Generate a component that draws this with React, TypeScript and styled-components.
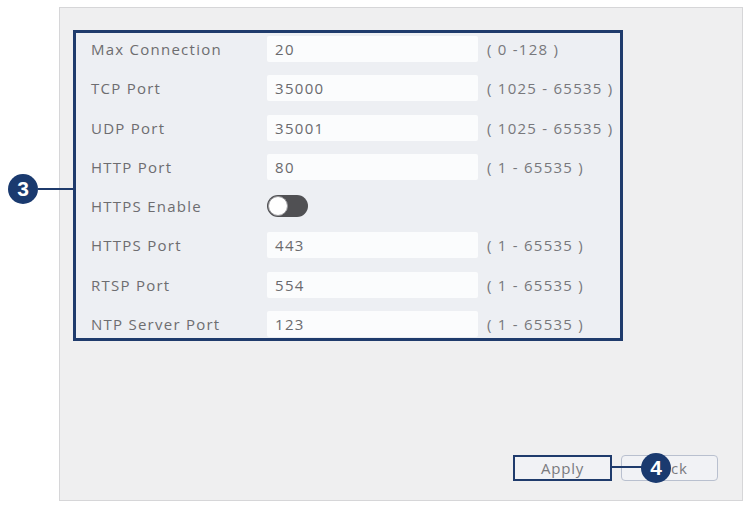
import React from 'react';
import styled, {createGlobalStyle} from 'styled-components';

const GlobalStyle = createGlobalStyle`
  body {
    margin: 0;
    background: #ffffff;
    font-family: "Open Sans", "Liberation Sans", sans-serif;
  }
`

const Page = styled.div`
  position: relative;
  width: 746px;
  height: 506px;
  padding: 7px 3px 5px 59px;
  box-sizing: border-box;
`
const Panel = styled.div`
  display: flex;
  flex-direction: column;
  height: 100%;
  background: #efeff0;
  border: 1px solid #d6d6d8;
  box-sizing: border-box;
`
const Highlight = styled.div`
  display: flex;
  flex-direction: column;
  gap: 13.3px;
  width: 550px;
  height: 311px;
  margin: 22px 0 0 13px;
  padding: 3px 0 0 15px;
  box-sizing: border-box;
  border: 3px solid #1f3b6c;
  background: #edeff3;
`
const Row = styled.div`
  display: flex;
  align-items: center;
  height: 26px;
`
const Label = styled.div`
  width: 176px;
  flex: none;
  font-size: 15px;
  font-weight: 500;
  letter-spacing: 1.25px;
  color: #6d6d70;
  white-space: nowrap;
`
const Field = styled.div`
  display: flex;
  align-items: center;
  width: 211px;
  height: 26px;
  padding-left: 8px;
  box-sizing: border-box;
  background: #fbfcfd;
  border-radius: 2px;
  font-size: 15px;
  letter-spacing: 1.3px;
  color: #6a6a6d;
`
const Range = styled.div`
  margin-left: 9px;
  font-size: 15px;
  letter-spacing: 1.25px;
  color: #78787c;
  white-space: nowrap;
`
const Toggle = styled.div<{on?: boolean}>`
  position: relative;
  width: 41px;
  height: 22px;
  border-radius: 11px;
  background: ${p => p.on ? '#1f3b6c' : '#505053'};
  &::after {
    content: '';
    position: absolute;
    top: 1px;
    left: ${p => p.on ? '20px' : '1px'};
    width: 18px;
    height: 18px;
    border-radius: 50%;
    background: #ffffff;
    border: 1px solid #9a9a9e;
  }
`
const Footer = styled.div`
  display: flex;
  justify-content: flex-end;
  gap: 9px;
  margin-top: auto;
  padding: 0 24px 19px 0;
`
const Button = styled.div<{marked?: boolean}>`
  display: flex;
  align-items: center;
  justify-content: center;
  width: ${p => p.marked ? '99px' : '97px'};
  height: 26px;
  box-sizing: border-box;
  border: ${p => p.marked ? '2px solid #1f3b6c' : '1.5px solid #b9c0cf'};
  border-radius: ${p => p.marked ? '0' : '4px'};
  background: #f1f2f5;
  font-size: 15px;
  letter-spacing: 0.8px;
  color: #7a7a7e;
`
const Badge = styled.div<{x: number, y: number}>`
  position: absolute;
  left: ${p => p.x}px;
  top: ${p => p.y}px;
  display: flex;
  align-items: center;
  justify-content: center;
  width: 30px;
  height: 30px;
  border-radius: 50%;
  background: #1a3a6f;
  color: #ffffff;
  font-family: "Liberation Sans", Arial, sans-serif;
  font-weight: 700;
  font-size: 21px;
  z-index: 2;
`
const Leader = styled.div<{x: number, y: number, w: number}>`
  position: absolute;
  left: ${p => p.x}px;
  top: ${p => p.y}px;
  width: ${p => p.w}px;
  height: 2px;
  background: #1f3b6c;
  z-index: 1;
`

type Item = {label: string, value?: string, range?: string, toggle?: boolean}

const items: Item[] = [
    {label: 'Max Connection', value: '20', range: '( 0 -128 )'},
    {label: 'TCP Port', value: '35000', range: '( 1025 - 65535 )'},
    {label: 'UDP Port', value: '35001', range: '( 1025 - 65535 )'},
    {label: 'HTTP Port', value: '80', range: '( 1 - 65535 )'},
    {label: 'HTTPS Enable', toggle: true},
    {label: 'HTTPS Port', value: '443', range: '( 1 - 65535 )'},
    {label: 'RTSP Port', value: '554', range: '( 1 - 65535 )'},
    {label: 'NTP Server Port', value: '123', range: '( 1 - 65535 )'},
]

const App: React.FC = () => {
    return (
        <Page>
            <GlobalStyle/>
            <Panel>
                <Highlight>
                    {items.map(item => (
                        <Row key={item.label}>
                            <Label>{item.label}</Label>
                            {item.toggle ? <Toggle/> : <Field>{item.value}</Field>}
                            {item.range && <Range>{item.range}</Range>}
                        </Row>
                    ))}
                </Highlight>
                <Footer>
                    <Button marked>Apply</Button>
                    <Button>Back</Button>
                </Footer>
            </Panel>
            <Leader x={38} y={188} w={36}/>
            <Badge x={8} y={174}>3</Badge>
            <Leader x={612} y={466} w={32}/>
            <Badge x={641} y={453}>4</Badge>
        </Page>
    );
};

export default App;
